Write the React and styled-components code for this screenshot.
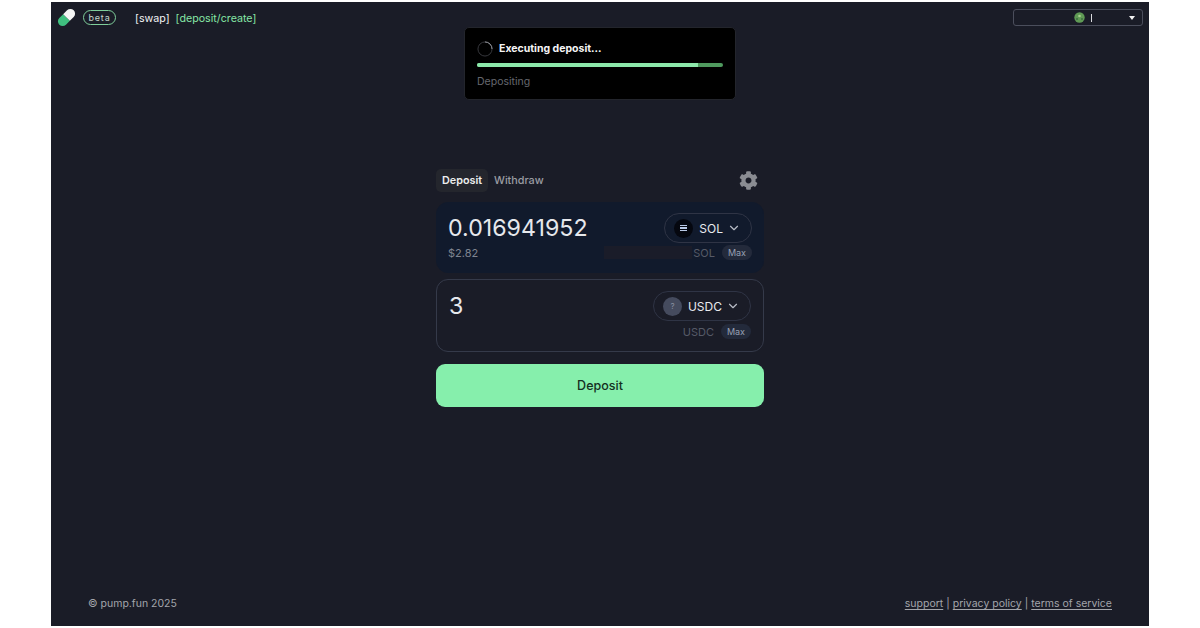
import React from 'react';
import styled, { createGlobalStyle } from 'styled-components';
import { ChevronDown } from 'lucide-react';
import { FaCog } from 'react-icons/fa';

const Global = createGlobalStyle`
    html, body {
        margin: 0;
        padding: 0;
        background: #fff;
        font-family: Inter, "Liberation Sans", sans-serif;
    }
    * { box-sizing: border-box; }
`

const Page = styled.div`
    width: 1200px;
    height: 628px;
    padding: 2px 51px;
`

const Shell = styled.div`
    position: relative;
    height: 624px;
    background: #1a1c27;
    display: flex;
    flex-direction: column;
    color: #fff;
`

const Header = styled.header`
    height: 31px;
    padding: 0 6px 0 5px;
    display: flex;
    align-items: center;
`

const Beta = styled.span`
    margin-left: 6px;
    width: 33px;
    height: 15px;
    border: 1px solid #7fcf9b;
    border-radius: 8px;
    display: flex;
    align-items: center;
    justify-content: center;
    font-size: 9px;
    font-weight: 400;
    letter-spacing: 0.8px;
    color: #c5d8cc;
`

const NavLink = styled.a`
    font-size: 10.7px;
    line-height: 15px;
    margin-top: 1px;
    color: ${({ $active }) => ($active ? '#86e6a6' : '#f1f2f4')};
    margin-left: ${({ $first }) => ($first ? '19px' : '6px')};
`

const WalletButton = styled.div`
    margin-left: auto;
    width: 130px;
    height: 17px;
    border: 1px solid #4b4e5c;
    border-radius: 3px;
    display: flex;
    align-items: center;
    padding: 0 7px 0 60px;
`

const WalletName = styled.span`
    width: 1px;
    height: 8px;
    margin-left: 6px;
    background: #d9dade;
`

const Caret = styled.span`
    margin-left: auto;
    border-left: 3px solid transparent;
    border-right: 3px solid transparent;
    border-top: 4px solid #f2f2f2;
`

const Toast = styled.div`
    position: absolute;
    top: 25px;
    left: 413px;
    width: 272px;
    height: 73px;
    background: #000;
    border: 1px solid #23252c;
    border-radius: 5px;
    padding: 11px 12px 0;
`

const ToastTitleRow = styled.div`
    display: flex;
    align-items: center;
    gap: 6px;
    height: 19px;
`

const ToastTitle = styled.span`
    font-size: 10.5px;
    font-weight: 700;
    color: #f5f5f5;
`

const Progress = styled.div`
    margin-top: 5px;
    height: 4px;
    border-radius: 2px;
    background: #4f9a5e;
    overflow: hidden;
`

const ProgressFill = styled.div`
    height: 100%;
    background: #8ce8aa;
`

const ToastNote = styled.div`
    margin-top: 8px;
    font-size: 10.5px;
    line-height: 14px;
    color: #66686f;
`

const Main = styled.main`
    flex: 1;
    padding-top: 136px;
    display: flex;
    justify-content: center;
`

const Column = styled.div`
    width: 328px;
    display: flex;
    flex-direction: column;
`

const TabRow = styled.div`
    height: 22px;
    display: flex;
    align-items: center;
    justify-content: space-between;
    padding-right: 6px;
    margin-bottom: 11px;
`

const Tabs = styled.div`
    display: flex;
    gap: 6px;
`

const Tab = styled.button`
    border: 0;
    border-radius: 5px;
    height: 23px;
    padding: 0 ${({ $active }) => ($active ? '6px' : '0')};
    font: ${({ $active }) => ($active ? 600 : 500)} 10.8px Inter, "Liberation Sans", sans-serif;
    background: ${({ $active }) => ($active ? '#24262d' : 'transparent')};
    color: ${({ $active }) => ($active ? '#eceded' : '#9a9ca3')};
`

const TokenCard = styled.section`
    position: relative;
    height: ${({ $filled }) => ($filled ? '71px' : '73px')};
    margin-bottom: ${({ $filled }) => ($filled ? '6px' : '12px')};
    border-radius: 12px;
    border: 1px solid ${({ $filled }) => ($filled ? '#111a2c' : '#353a4a')};
    background: ${({ $filled }) => ($filled ? '#111a2c' : 'transparent')};
    padding: ${({ $filled }) => ($filled ? '10px 11px 0 11px' : '11px 12px 0 12px')};
`

const AmountRow = styled.div`
    display: flex;
    align-items: center;
    justify-content: space-between;
`

const Amount = styled.span`
    font-size: 23.2px;
    font-weight: 400;
    line-height: 29px;
    color: #e6e8ec;
`

const TokenPill = styled.div`
    height: 30px;
    padding: 0 10px 0 9px;
    border: 1px solid #2f3445;
    border-radius: 15px;
    display: flex;
    align-items: center;
    font-size: 12px;
    font-weight: 400;
    color: #e8eaee;
`

const TokenIcon = styled.span`
    width: 19px;
    height: 19px;
    border-radius: 50%;
    margin-right: 6px;
    background: ${({ $unknown }) => ($unknown ? '#454b5e' : '#05070f')};
    color: #8a90a2;
    font-size: 8px;
    display: flex;
    flex-direction: column;
    align-items: center;
    justify-content: center;
    gap: 1px;
`

const SolBar = styled.i`
    width: 7px;
    height: 1.5px;
    background: #b9c8e4;
`

const PillChevron = styled(ChevronDown)`
    margin-left: 4px;
    color: #b8bcc6;
`

const InfoRow = styled.div`
    margin-top: ${({ $tight }) => ($tight ? '1px' : '2px')};
    height: 17px;
    display: flex;
    align-items: center;
`

const Usd = styled.span`
    font-size: 11px;
    color: #7f8490;
`

const Balance = styled.div`
    margin-left: auto;
    display: flex;
    align-items: center;
    gap: 7px;
    font-size: 11px;
    color: #565a67;
`

const BalanceSkeleton = styled.span`
    position: absolute;
    left: 167px;
    bottom: 13px;
    width: 88px;
    height: 13px;
    background: #1a1c29;
`

const MaxTag = styled.span`
    position: relative;
    width: 30px;
    height: 15px;
    border-radius: 8px;
    background: #232a3b;
    color: #98a0b3;
    font-size: 9px;
    font-weight: 400;
    display: flex;
    align-items: center;
    justify-content: center;
`

const DepositButton = styled.button`
    height: 43px;
    border: 0;
    border-radius: 9px;
    background: #86efac;
    color: #14301f;
    font: 500 12.5px Inter, "Liberation Sans", sans-serif;
`

const Footer = styled.footer`
    height: 30px;
    padding: 0 37px 0 37px;
    display: flex;
    align-items: flex-start;
    justify-content: space-between;
    font-size: 10.5px;
    line-height: 15px;
    color: #a3a5ab;
`

const FooterLinks = styled.div`
    display: flex;
    gap: 3px;
`

const FooterLink = styled.a`
    text-decoration: underline;
    text-underline-offset: 2px;
`

const Pill = () => (
    <svg width="21" height="21" viewBox="0 0 20 20">
        <g transform="rotate(-45 10 10)">
            <path d="M10 5.5H4.8a4.5 4.5 0 0 0 0 9H10z" fill="#3fbf7f" />
            <path d="M10 5.5h5.2a4.5 4.5 0 0 1 0 9H10z" fill="#f4f5f4" />
        </g>
    </svg>
);

const Frog = () => (
    <svg width="11" height="11" viewBox="0 0 11 11">
        <circle cx="5.5" cy="5.5" r="5.2" fill="#5f9a55" />
        <circle cx="5.5" cy="4" r="1.3" fill="#a7cf8e" />
        <circle cx="3" cy="7" r="1" fill="#3e6d43" />
        <circle cx="8" cy="7" r="1" fill="#3e6d43" />
    </svg>
);

const Spinner = () => (
    <svg width="16" height="16" viewBox="0 0 17 17" fill="none">
        <circle cx="8.5" cy="8.5" r="7.5" stroke="#3a3b40" strokeWidth="1" />
        <path d="M8.5 1a7.5 7.5 0 0 1 7.5 7.5" stroke="#9b9da2" strokeWidth="1" />
    </svg>
);

const App = () => {
    return (
        <Page>
            <Global />
            <Shell>
                <Header>
                    <Pill />
                    <Beta>beta</Beta>
                    <NavLink $first>[swap]</NavLink>
                    <NavLink $active>[deposit/create]</NavLink>
                    <WalletButton>
                        <Frog />
                        <WalletName />
                        <Caret />
                    </WalletButton>
                </Header>

                <Toast>
                    <ToastTitleRow>
                        <Spinner />
                        <ToastTitle>Executing deposit...</ToastTitle>
                    </ToastTitleRow>
                    <Progress>
                        <ProgressFill style={{ width: '90%' }} />
                    </Progress>
                    <ToastNote>Depositing</ToastNote>
                </Toast>

                <Main>
                    <Column>
                        <TabRow>
                            <Tabs>
                                <Tab $active>Deposit</Tab>
                                <Tab>Withdraw</Tab>
                            </Tabs>
                            <FaCog size={19} color="#8a8c92" />
                        </TabRow>

                        <TokenCard $filled>
                            <AmountRow>
                                <Amount>0.016941952</Amount>
                                <TokenPill>
                                    <TokenIcon>
                                        <SolBar />
                                        <SolBar />
                                        <SolBar />
                                    </TokenIcon>
                                    SOL
                                    <PillChevron size={14} />
                                </TokenPill>
                            </AmountRow>
                            <InfoRow $tight>
                                <Usd>$2.82</Usd>
                                <BalanceSkeleton />
                                <Balance>
                                    SOL
                                    <MaxTag>Max</MaxTag>
                                </Balance>
                            </InfoRow>
                        </TokenCard>

                        <TokenCard>
                            <AmountRow>
                                <Amount>3</Amount>
                                <TokenPill>
                                    <TokenIcon $unknown>?</TokenIcon>
                                    USDC
                                    <PillChevron size={14} />
                                </TokenPill>
                            </AmountRow>
                            <InfoRow>
                                <Balance>
                                    USDC
                                    <MaxTag>Max</MaxTag>
                                </Balance>
                            </InfoRow>
                        </TokenCard>

                        <DepositButton>Deposit</DepositButton>
                    </Column>
                </Main>

                <Footer>
                    <span>© pump.fun 2025</span>
                    <FooterLinks>
                        <FooterLink>support</FooterLink>|
                        <FooterLink>privacy policy</FooterLink>|
                        <FooterLink>terms of service</FooterLink>
                    </FooterLinks>
                </Footer>
            </Shell>
        </Page>
    );
};

export default App;
